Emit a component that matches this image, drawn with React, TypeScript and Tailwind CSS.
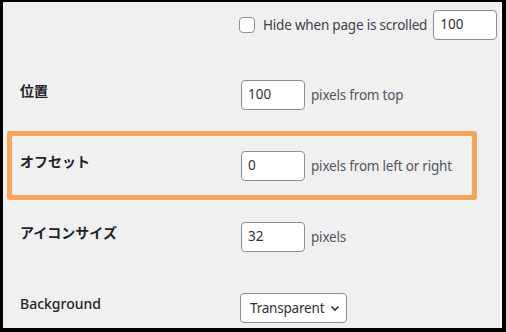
import React from "react";

const Input = ({ value }: { value: string }) => (
  <div className="w-[64px] h-[30px] bg-white border border-[#8c8f94] rounded-[4px] flex items-center pl-[6px] text-[13.5px] text-[#2c3338] leading-none">
    {value}
  </div>
);

const Desc = ({ children }: { children: React.ReactNode }) => (
  <span className="ml-[6px] text-[13.5px] tracking-[-0.2px] text-[#50575e] leading-5 whitespace-nowrap">{children}</span>
);

const Label = ({ children, className = "" }: { children: React.ReactNode; className?: string }) => (
  <div className={"text-[14px] text-[#1d2327] leading-5 mt-[1px] whitespace-nowrap " + className}>{children}</div>
);

export default function App() {
  return (
    <div className="w-[506px] h-[332px] bg-black pt-[2px] pl-[3px] pr-[4px] pb-[4px] font-['Noto_Sans','Noto_Sans_CJK_JP',sans-serif]">
      <div className="h-full bg-[#f0f0f1] border-r-2 border-[#fafafa] flex flex-col">
        {/* Row 0 */}
        <div className="h-[78px] pt-[8px] pl-[236px] shrink-0">
          <div className="flex items-center h-[30px]">
            <div className="w-4 h-4 shrink-0 bg-white border border-[#8c8f94] rounded-[4px]" />
            <span className="ml-[8px] text-[13.5px] tracking-[-0.2px] text-[#3c434a] leading-5 whitespace-nowrap">Hide when page is scrolled</span>
            <div className="ml-[6px] shrink-0">
              <Input value="100" />
            </div>
          </div>
        </div>
        {/* 位置 */}
        <div className="h-[51px] flex items-start pl-[17px] shrink-0">
          <Label className="w-[221px] font-bold">位置</Label>
          <div className="flex items-center">
            <Input value="100" />
            <Desc>pixels from top</Desc>
          </div>
        </div>
        {/* オフセット */}
        <div className="ml-[4px] w-[470px] h-[69px] border-[5px] border-[#f7a658] rounded-[3px] flex items-start pt-[15px] pl-[8px] shrink-0">
          <Label className="w-[221px] font-bold">オフセット</Label>
          <div className="flex items-center">
            <Input value="0" />
            <Desc>pixels from left or right</Desc>
          </div>
        </div>
        {/* アイコンサイズ */}
        <div className="mt-[22px] h-[71px] flex items-start pl-[17px] shrink-0">
          <Label className="w-[221px] font-bold">アイコンサイズ</Label>
          <div className="flex items-center">
            <Input value="32" />
            <Desc>pixels</Desc>
          </div>
        </div>
        {/* Background */}
        <div className="flex items-start pl-[17px] shrink-0">
          <Label className="w-[220px] font-medium">Background</Label>
          <div className="w-[107px] h-[30px] bg-white border border-[#8c8f94] rounded-[4px] flex items-center pl-[9px] text-[13.5px] tracking-[-0.2px] text-[#2c3338] whitespace-nowrap">
            <span>Transparent</span>
            <svg className="ml-[6px] shrink-0" width="10" height="7" viewBox="0 0 10 7">
              <path d="M1.5 1.5 L5 5 L8.5 1.5" fill="none" stroke="#2c3338" strokeWidth="1.6" />
            </svg>
          </div>
        </div>
      </div>
    </div>
  );
}
